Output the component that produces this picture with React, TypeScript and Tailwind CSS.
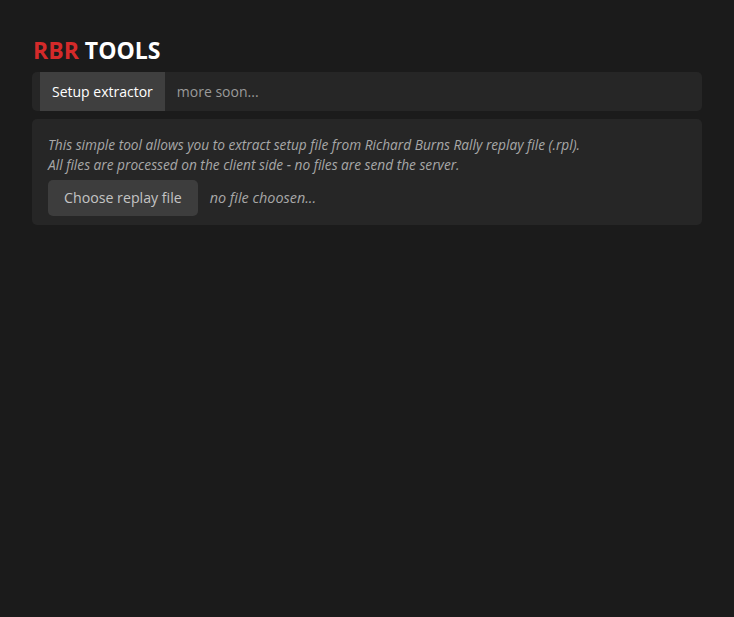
export default function App() {
  return (
    <div className="min-h-screen bg-[#1b1b1b] px-[32px] pt-[36px] font-['Open_Sans',sans-serif]">
      <h1 className="pl-[1px] text-[23px] font-bold leading-[28px]">
        <span className="text-[#d42a2a]">RBR</span> <span className="text-white">TOOLS</span>
      </h1>
      <nav className="mt-[8px] flex h-[39px] items-stretch rounded-[5px] bg-[#262626] pl-[8px]">
        <button className="bg-[#3f3f3f] px-[12px] text-[14px] text-white">Setup extractor</button>
        <span className="flex items-center px-[12px] text-[14px] text-[#9a9a9a]">more soon...</span>
      </nav>
      <section className="mt-[8px] rounded-[5px] bg-[#262626] px-[16px] pb-[9px] pt-[16px]">
        <p className="text-[13.7px] italic leading-[20px] text-[#a8a8a8]">
          This simple tool allows you to extract setup file from Richard Burns Rally replay file (.rpl).
          <br />
          All files are processed on the client side - no files are send the server.
        </p>
        <div className="mt-[5px] flex items-center gap-[12px]">
          <button className="h-[36px] rounded-[5px] bg-[#3d3d3d] px-[16px] text-[14.2px] text-[#c4c4c4]">
            Choose replay file
          </button>
          <span className="text-[14.4px] italic text-[#a8a8a8]">no file choosen...</span>
        </div>
      </section>
    </div>
  );
}
